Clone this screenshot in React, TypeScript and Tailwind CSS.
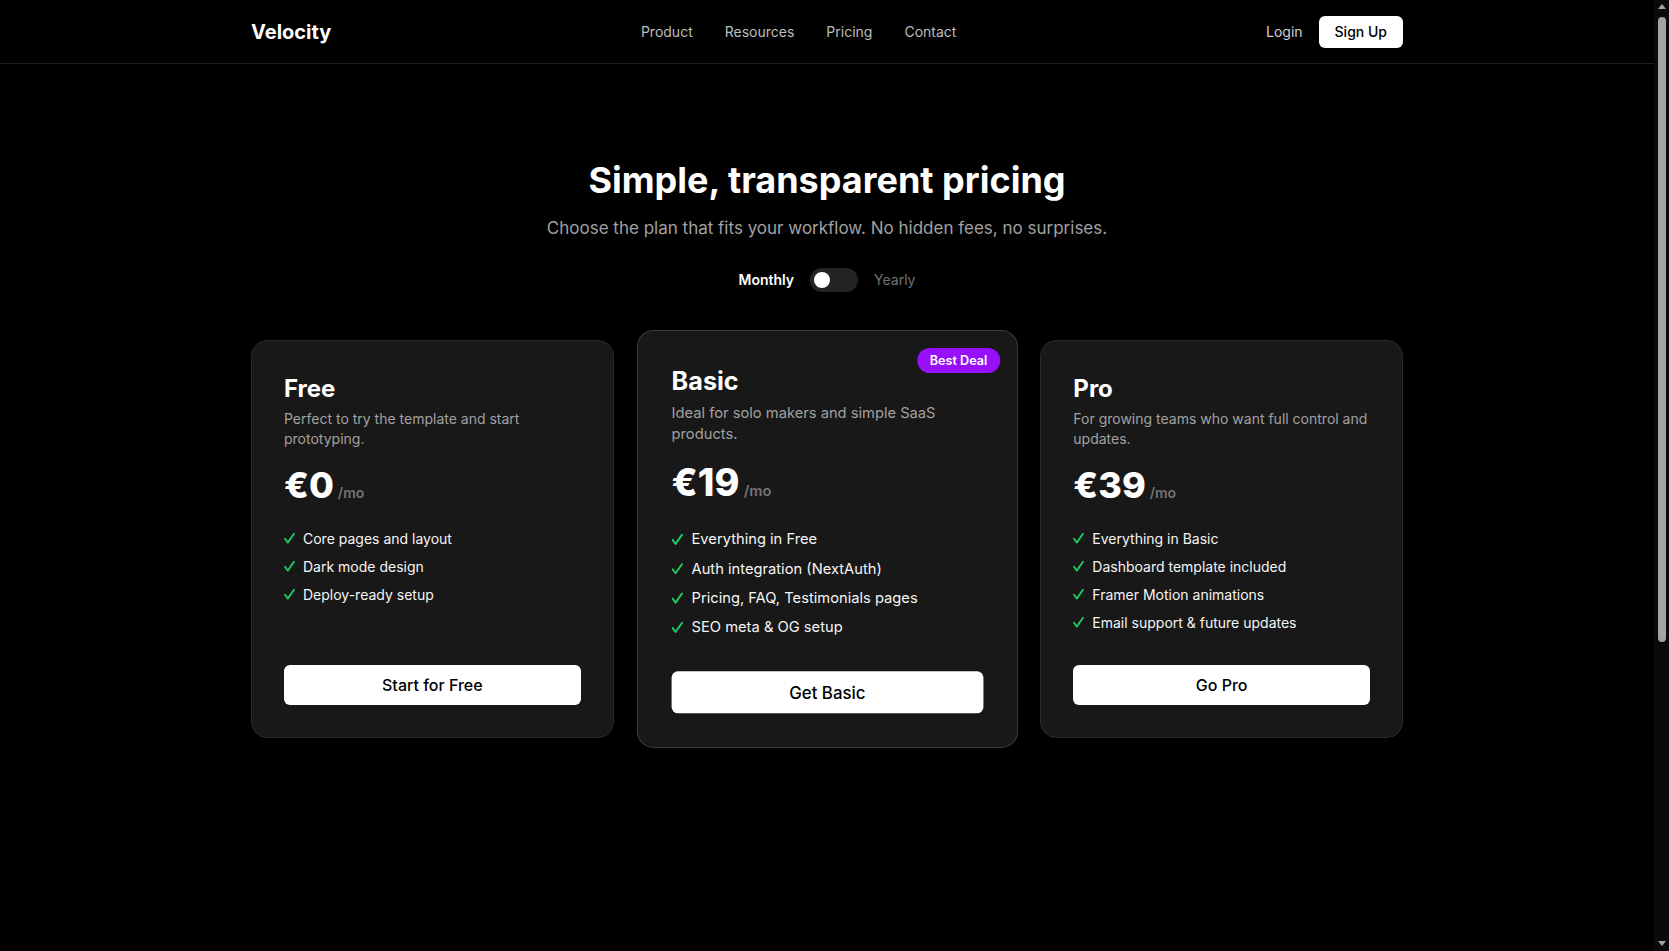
import React from "react";

type Plan = {
  name: string;
  desc: string;
  price: string;
  features: string[];
  cta: string;
  featured?: boolean;
};

const plans: Plan[] = [
  {
    name: "Free",
    desc: "Perfect to try the template and start prototyping.",
    price: "€0",
    features: ["Core pages and layout", "Dark mode design", "Deploy-ready setup"],
    cta: "Start for Free",
  },
  {
    name: "Basic",
    desc: "Ideal for solo makers and simple SaaS products.",
    price: "€19",
    features: [
      "Everything in Free",
      "Auth integration (NextAuth)",
      "Pricing, FAQ, Testimonials pages",
      "SEO meta & OG setup",
    ],
    cta: "Get Basic",
    featured: true,
  },
  {
    name: "Pro",
    desc: "For growing teams who want full control and updates.",
    price: "€39",
    features: [
      "Everything in Basic",
      "Dashboard template included",
      "Framer Motion animations",
      "Email support & future updates",
    ],
    cta: "Go Pro",
  },
];

const Check = () => (
  <svg width="11" height="11" viewBox="0 0 11 11" fill="none" className="shrink-0">
    <path d="M1 5.8 L3.8 9.6 L10 0.8" stroke="#22c55e" strokeWidth="1.9" strokeLinecap="round" strokeLinejoin="round" />
  </svg>
);

const PlanCard: React.FC<{ plan: Plan }> = ({ plan }) => {
  return (
    <div
      className={
        plan.featured
          ? "relative flex flex-col rounded-2xl border border-[#3a3a3a] bg-[#181818] p-8 scale-105"
          : "relative flex flex-col rounded-2xl border border-[#2a2a2a] bg-[#181818] p-8"
      }
    >
      {plan.featured && (
        <span className="absolute top-4 right-4 rounded-full bg-purple-600 px-3 py-1 text-xs font-semibold text-white">
          Best Deal
        </span>
      )}
      <h3 className="text-2xl font-bold text-white">{plan.name}</h3>
      <p className="mt-1 text-sm text-neutral-400">{plan.desc}</p>
      <div className="mt-4 flex items-baseline">
        <span className="text-4xl font-extrabold text-white">{plan.price}</span>
        <span className="ml-1 text-sm font-semibold text-neutral-500">/mo</span>
      </div>
      <ul className="mt-6 flex-1 space-y-2">
        {plan.features.map((f) => (
          <li key={f} className="flex items-center gap-2 text-sm text-neutral-100">
            <Check />
            <span>{f}</span>
          </li>
        ))}
      </ul>
      <button className="mt-8 w-full rounded-md bg-white py-2 text-base font-medium text-black">
        {plan.cta}
      </button>
    </div>
  );
};

const App: React.FC = () => {
  return (
    <div className="flex h-screen bg-black text-white font-['Inter',sans-serif]">
      <div className="flex-1 overflow-hidden">
        {/* Navbar */}
        <nav className="h-16 border-b border-[#1f1f1f]">
          <div className="mx-auto flex h-full max-w-6xl items-center justify-between">
            <span className="text-xl font-bold">Velocity</span>
            <div className="flex items-center gap-8 text-sm text-[#bdbdbd]">
              <a>Product</a>
              <a>Resources</a>
              <a>Pricing</a>
              <a>Contact</a>
            </div>
            <div className="flex items-center gap-4 text-sm">
              <a className="text-[#d0d0d0]">Login</a>
              <button className="rounded-md bg-white px-4 py-1.5 font-medium text-black">
                Sign Up
              </button>
            </div>
          </div>
        </nav>

        {/* Pricing */}
        <section className="mx-auto max-w-6xl pt-24">
          <h1 className="text-center text-4xl font-bold">Simple, transparent pricing</h1>
          <p className="mt-4 text-center text-[17px] text-neutral-400">
            Choose the plan that fits your workflow. No hidden fees, no surprises.
          </p>

          <div className="mt-[26px] flex items-center justify-center gap-4 text-sm">
            <span className="font-semibold text-white">Monthly</span>
            <div className="flex h-6 w-12 items-center rounded-full bg-[#232323] px-1">
              <span className="h-4 w-4 rounded-full bg-white"></span>
            </div>
            <span className="text-neutral-500">Yearly</span>
          </div>

          <div className="mt-12 grid grid-cols-3 gap-8">
            {plans.map((p) => (
              <PlanCard key={p.name} plan={p} />
            ))}
          </div>
        </section>
      </div>

      {/* page scrollbar */}
      <div className="flex w-[15px] flex-col items-center bg-[#0a0a0a]">
        <span className="mt-[4px] h-0 w-0 border-x-[4px] border-b-[5px] border-x-transparent border-b-[#a3a3a3]"></span>
        <span className="mt-[8px] h-[625px] w-[8px] rounded-full bg-[#a3a3a3]"></span>
        <span className="mt-auto mb-[5px] h-0 w-0 border-x-[4px] border-t-[5px] border-x-transparent border-t-[#a3a3a3]"></span>
      </div>
    </div>
  );
};

export default App;
